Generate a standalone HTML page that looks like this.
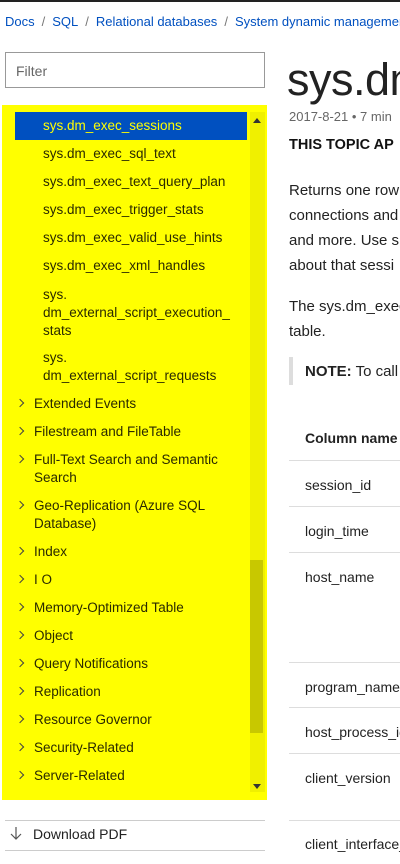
<!DOCTYPE html>
<html><head><style>
*{margin:0;padding:0;box-sizing:border-box}
body{width:400px;height:864px;overflow:hidden;background:#fff;font-family:"Liberation Sans",sans-serif;position:relative;color:#000}
.a{position:absolute;white-space:nowrap}
.bc{top:14px;font-size:13px;color:#0050c0}
.bc span{color:#777;margin:0 7px}
.t{font-size:14px;color:#222}
.yl{left:2px;top:105px;width:265px;height:695px;background:#ffff00}
.li{position:absolute;font-size:13.5px;color:#2a2a00;white-space:nowrap}
.ch{position:absolute;left:17px;width:6px;height:6px;border-right:1.2px solid #444;border-top:1.2px solid #444;transform:rotate(45deg)}
.hr{position:absolute;left:289px;width:111px;height:1px;background:#ddd}
</style></head><body>
<div class="a" style="left:0;top:0;width:400px;height:2px;background:#222"></div>
<div class="a bc" style="left:5px">Docs<span>/</span>SQL<span>/</span>Relational databases<span>/</span>System dynamic management</div>
<div class="a" style="left:5px;top:52px;width:260px;height:36px;border:1px solid #999;font-size:14px;color:#666;padding:10px 0 0 10px">Filter</div>
<div class="a yl"></div>
<div class="a" style="left:250px;top:112px;width:15px;height:680px;background:#f0f000"></div>
<div class="a" style="left:250px;top:560px;width:13px;height:173px;background:#c8c800"></div>
<div class="a" style="left:253px;top:118px;width:0;height:0;border-left:4px solid transparent;border-right:4px solid transparent;border-bottom:5px solid #333"></div>
<div class="a" style="left:253px;top:784px;width:0;height:0;border-left:4px solid transparent;border-right:4px solid transparent;border-top:5px solid #333"></div>
<div class="a" style="left:15px;top:112px;width:232px;height:28px;background:#0050c0"></div>
<div class="li" style="left:43px;top:118px;color:#ffff00">sys.dm_exec_sessions</div>
<div class="li" style="left:43px;top:146px">sys.dm_exec_sql_text</div>
<div class="li" style="left:43px;top:174px">sys.dm_exec_text_query_plan</div>
<div class="li" style="left:43px;top:202px">sys.dm_exec_trigger_stats</div>
<div class="li" style="left:43px;top:230px">sys.dm_exec_valid_use_hints</div>
<div class="li" style="left:43px;top:258px">sys.dm_exec_xml_handles</div>
<div class="li" style="left:43px;top:286px;line-height:18px">sys.<br>dm_external_script_execution_<br>stats</div>
<div class="li" style="left:43px;top:349px;line-height:18px">sys.<br>dm_external_script_requests</div>
<div class="ch" style="top:400px"></div><div class="li" style="left:34px;top:396px">Extended Events</div>
<div class="ch" style="top:428px"></div><div class="li" style="left:34px;top:424px">Filestream and FileTable</div>
<div class="ch" style="top:456px"></div><div class="li" style="left:34px;top:451px;line-height:18px">Full-Text Search and Semantic<br>Search</div>
<div class="ch" style="top:502px"></div><div class="li" style="left:34px;top:497px;line-height:18px">Geo-Replication (Azure SQL<br>Database)</div>
<div class="ch" style="top:548px"></div><div class="li" style="left:34px;top:544px">Index</div>
<div class="ch" style="top:576px"></div><div class="li" style="left:34px;top:572px">I O</div>
<div class="ch" style="top:604px"></div><div class="li" style="left:34px;top:600px">Memory-Optimized Table</div>
<div class="ch" style="top:632px"></div><div class="li" style="left:34px;top:628px">Object</div>
<div class="ch" style="top:660px"></div><div class="li" style="left:34px;top:656px">Query Notifications</div>
<div class="ch" style="top:688px"></div><div class="li" style="left:34px;top:684px">Replication</div>
<div class="ch" style="top:716px"></div><div class="li" style="left:34px;top:712px">Resource Governor</div>
<div class="ch" style="top:744px"></div><div class="li" style="left:34px;top:740px">Security-Related</div>
<div class="ch" style="top:772px"></div><div class="li" style="left:34px;top:768px">Server-Related</div>
<div class="a" style="left:5px;top:820px;width:260px;height:1px;background:#ccc"></div>
<div class="a" style="left:5px;top:850px;width:260px;height:1px;background:#ccc"></div>
<svg class="a" style="left:10px;top:826px" width="12" height="14" viewBox="0 0 12 14"><path d="M6 1V13M1 8L6 13L11 8" fill="none" stroke="#555" stroke-width="1.2"/></svg>
<div class="a t" style="left:33px;top:826px;font-size:14px">Download PDF</div>
<div class="a" style="left:287px;top:54px;font-size:45px;font-weight:300;color:#222;letter-spacing:-0.5px">sys.dm</div>
<div class="a" style="left:289px;top:109px;font-size:13px;color:#666">2017-8-21 • 7 min</div>
<div class="a" style="left:289px;top:137px;font-size:14.5px;font-weight:bold;color:#111">THIS TOPIC AP</div>
<div class="a t" style="left:289px;top:178px;line-height:25px;font-size:15px">Returns one row<br>connections and<br>and more. Use s<br>about that sessi</div>
<div class="a t" style="left:289px;top:294px;line-height:25px;font-size:15px">The sys.dm_exec<br>table.</div>
<div class="a" style="left:289px;top:357px;width:4px;height:28px;background:#ddd"></div>
<div class="a t" style="left:305px;top:363px;font-size:15px"><b>NOTE:</b> To call</div>
<div class="a t" style="left:305px;top:430px;font-weight:bold">Column name</div>
<div class="hr" style="top:460px"></div>
<div class="a t" style="left:305px;top:477px">session_id</div>
<div class="hr" style="top:506px"></div>
<div class="a t" style="left:305px;top:523px">login_time</div>
<div class="hr" style="top:552px"></div>
<div class="a t" style="left:305px;top:569px">host_name</div>
<div class="hr" style="top:662px"></div>
<div class="a t" style="left:305px;top:679px">program_name</div>
<div class="hr" style="top:707px"></div>
<div class="a t" style="left:305px;top:724px">host_process_id</div>
<div class="hr" style="top:753px"></div>
<div class="a t" style="left:305px;top:770px">client_version</div>
<div class="hr" style="top:820px"></div>
<div class="a t" style="left:305px;top:836px">client_interface_</div>
</body></html>
